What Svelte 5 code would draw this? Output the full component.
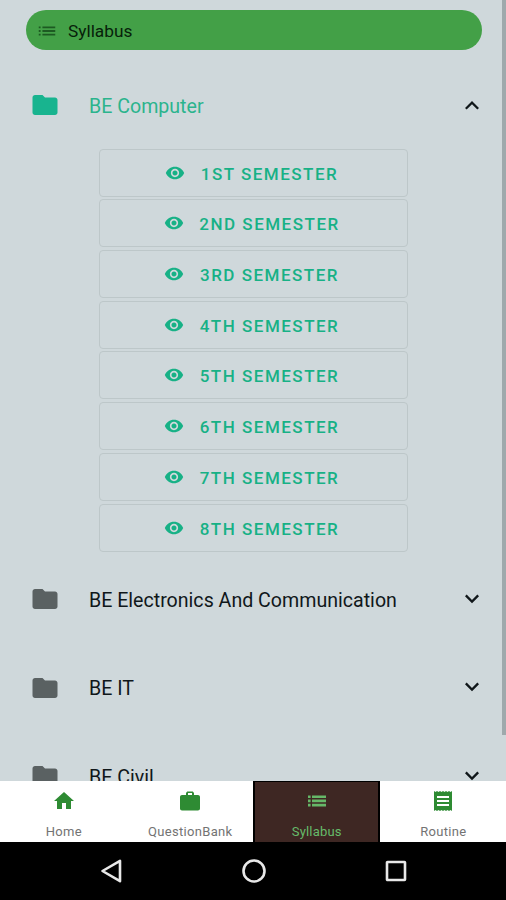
<script>
  const icons = {
    list: "M3 13h2v-2H3v2zm0 4h2v-2H3v2zm0-8h2V7H3v2zm4 4h14v-2H7v2zm0 4h14v-2H7v2zM7 7v2h14V7H7z",
    rows: "M3 13.2h2.6v-2.6H3zm0 4.2h2.6v-2.6H3zM3 9h2.6V6.4H3zm4 4.2h14v-2.6H7zm0 4.2h14v-2.6H7zM7 6.4V9h14V6.4z",
    folder: "M10 4H4c-1.1 0-2 .9-2 2v12c0 1.1.9 2 2 2h16c1.1 0 2-.9 2-2V8c0-1.1-.9-2-2-2h-8l-2-2z",
    eye: "M12 4.5C7 4.5 2.73 7.61 1 12c1.73 4.39 6 7.5 11 7.5s9.27-3.11 11-7.5c-1.73-4.39-6-7.5-11-7.5zM12 17c-2.76 0-5-2.24-5-5s2.24-5 5-5 5 2.24 5 5-2.24 5-5 5zm0-8c-1.66 0-3 1.34-3 3s1.34 3 3 3 3-1.34 3-3-1.34-3-3-3z",
    up: "M12 8.5l-6 6 1.41 1.41L12 11.33l4.59 4.58L18 14.5z",
    down: "M16.59 8.2L12 12.78 7.41 8.2 6 9.61l6 6 6-6z",
    home: "M10 20v-6h4v6h5v-8h3L12 3 2 12h3v8z",
    bag: "M20 6h-4V4l-1.2-1.5H9.2L8 4v2H4c-1.1 0-2 .9-2 2v11.5c0 1.1.9 2 2 2h16c1.1 0 2-.9 2-2V8c0-1.1-.9-2-2-2zm-6 0h-4V4h4v2z",
    receipt: "M18 17H6v-2h12v2zm0-4H6v-2h12v2zm0-4H6V7h12v2zM3 22l1.5-1L6 22l1.5-1L9 22l1.5-1 1.5 1 1.5-1 1.5 1 1.5-1 1.5 1 1.5-1 1.5 1V2l-1.5 1L18 2l-1.5 1L15 2l-1.5 1L12 2l-1.5 1L9 2 7.5 3 6 2 4.5 3 3 2v20z",
  };

  const semesters = ["1st", "2nd", "3rd", "4th", "5th", "6th", "7th", "8th"];
  const courses = ["BE Computer", "BE Electronics And Communication", "BE IT", "BE Civil"];
  const tabs = [
    { label: "Home", icon: "home" },
    { label: "QuestionBank", icon: "bag" },
    { label: "Syllabus", icon: "rows" },
    { label: "Routine", icon: "receipt" },
  ];

  let opened = $state("BE Computer");
  let activeTab = $state("Syllabus");

  function toggle(course) {
    opened = opened === course ? "" : course;
  }
</script>

{#snippet icon(name, size)}
  <svg class="icon" viewBox="0 0 24 24" width={size} height={size} aria-hidden="true">
    <path d={icons[name]} />
  </svg>
{/snippet}

<div class="screen">
  <main>
    <div class="content">
      <header>
        {@render icon("list", 22)}
        <span>Syllabus</span>
      </header>

      {#each courses as course}
        <button class="course" class:open={opened === course} onclick={() => toggle(course)}>
          {@render icon("folder", 30)}
          <span class="name">{course}</span>
          <span class="arrow">{@render icon(opened === course ? "up" : "down", 28)}</span>
        </button>
        {#if opened === course}
          <div class="semesters">
            {#each semesters as semester}
              <button class="semester">
                {@render icon("eye", 20)}
                <span>{semester} Semester</span>
              </button>
            {/each}
          </div>
        {/if}
      {/each}
    </div>
    <div class="track"><div class="thumb"></div></div>
  </main>

  <nav>
    {#each tabs as tab}
      <button class="tab" class:active={activeTab === tab.label} onclick={() => (activeTab = tab.label)}>
        {@render icon(tab.icon, 24)}
        <span>{tab.label}</span>
      </button>
    {/each}
  </nav>

  <footer>
    <svg viewBox="0 0 24 24" width="24" height="24"><path d="M2.5 12L20 1.8v20.4z" /></svg>
    <svg viewBox="0 0 24 24" width="24" height="24"><circle cx="12" cy="12" r="10.5" /></svg>
    <svg viewBox="0 0 24 24" width="24" height="24"><rect x="3" y="3" width="18" height="18" rx="0.5" /></svg>
  </footer>
</div>

<style>
  :global(body) {
    margin: 0;
  }
  .screen {
    display: flex;
    flex-direction: column;
    width: 506px;
    height: 900px;
    overflow: hidden;
    font-family: Roboto, sans-serif;
    background: #000;
  }
  button {
    padding: 0;
    border: 0;
    background: none;
    font: inherit;
    cursor: pointer;
  }
  .icon {
    display: block;
    flex: none;
    fill: currentColor;
  }
  main {
    display: flex;
    height: 781px;
    overflow: hidden;
    background: #cfd8db;
  }
  .content {
    flex: 1;
  }
  header {
    display: flex;
    align-items: center;
    gap: 10px;
    box-sizing: border-box;
    width: 456px;
    height: 40px;
    margin: 10.4px 0 10.5px 26px;
    padding-left: 10px;
    border-radius: 20px;
    background: #43a047;
    color: #07210a;
    font-size: 17.3px;
  }
  header .icon {
    margin-top: 2px;
    fill: #1d5a22;
  }
  header span {
    padding-top: 2px;
  }
  .course {
    display: flex;
    align-items: center;
    width: 100%;
    height: 88.4px;
    padding: 0 16px 0 29.5px;
    color: #10171a;
    font-size: 19.6px;
    text-align: left;
  }
  .course > .icon {
    fill: #5a6162;
  }
  .course.open {
    color: #2bb48d;
  }
  .course.open > .icon {
    fill: #18b48f;
  }
  .name {
    flex: 1;
    margin-left: 29.5px;
    padding-top: 2px;
  }
  .arrow {
    color: #10171a;
    padding-bottom: 1px;
  }
  .semesters {
    display: flex;
    flex-direction: column;
    gap: 2.7px;
    width: 309.5px;
    margin: -0.6px 0 3.8px 98.5px;
  }
  .semester {
    display: flex;
    align-items: center;
    justify-content: center;
    gap: 15.5px;
    box-sizing: border-box;
    height: 48px;
    padding-right: 3px;
    border: 1.5px solid #bdc7c9;
    border-radius: 4px;
    color: #17b186;
    font-size: 17px;
    font-weight: 500;
    letter-spacing: 1.5px;
    text-transform: uppercase;
  }
  .semester span {
    padding-top: 2px;
  }
  .track {
    width: 4px;
  }
  .thumb {
    height: 735px;
    background: #9ea9ac;
  }
  nav {
    display: grid;
    grid-template-columns: repeat(4, 1fr);
    height: 61px;
    background: #fff;
  }
  .tab {
    display: flex;
    flex-direction: column;
    align-items: center;
    gap: 11px;
    box-sizing: border-box;
    padding: 8px 0 0 1px;
    color: #737373;
    font-size: 13px;
    letter-spacing: 0.3px;
  }
  .tab .icon {
    fill: #2e8b33;
  }
  .tab.active {
    padding-top: 7px;
    border: solid #000;
    border-width: 1px 2px 0;
    background: #3e2723;
    color: #66bb6a;
    letter-spacing: 0.2px;
  }
  .tab.active .icon {
    fill: #66b868;
  }
  footer {
    display: flex;
    flex: 1;
    align-items: center;
    justify-content: space-between;
    padding: 0 98px 0 100px;
  }
  footer svg {
    fill: none;
    stroke: #e8e8e8;
    stroke-width: 2.6;
    stroke-linejoin: round;
  }
</style>
